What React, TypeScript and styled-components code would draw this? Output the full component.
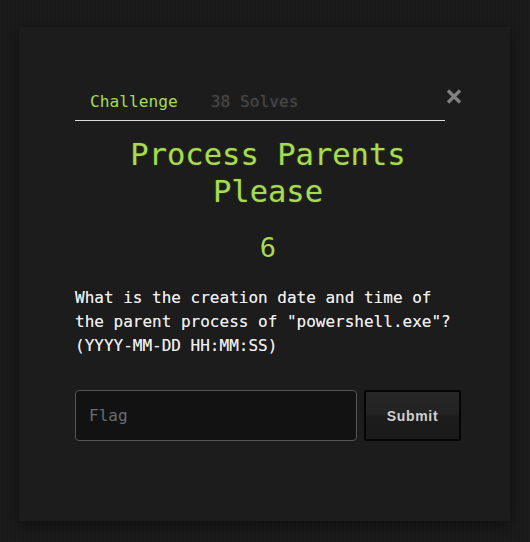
import React from "react";
import styled, { createGlobalStyle } from "styled-components";

const GREEN = "#a6dc4e";
const MONO = `"DejaVu Sans Mono", "Liberation Mono", monospace`;

const Global = createGlobalStyle`
  html, body {
    margin: 0;
    padding: 0;
    background: #1a1a1a;
  }
  body {
    font-family: ${MONO};
  }
  * { box-sizing: border-box; }
`;

const Page = styled.div`
  min-height: 542px;
  padding: 27px 20px 21px 19px;
  background-color: #1a1a1a;
  background-image: repeating-linear-gradient(
    90deg,
    rgba(255, 255, 255, 0.006) 0px,
    rgba(255, 255, 255, 0.006) 2px,
    rgba(0, 0, 0, 0.02) 2px,
    rgba(0, 0, 0, 0.02) 4px
  );
`;

const Modal = styled.div`
  width: 491px;
  height: 494px;
  padding: 57px 49px 0 56px;
  background: #1c1c1c;
  box-shadow: 0 4px 14px rgba(0, 0, 0, 0.45);
  display: flex;
  flex-direction: column;
`;

const Header = styled.div`
  display: flex;
  align-items: flex-start;
`;

const Tabs = styled.nav`
  flex: 1;
  display: flex;
  gap: 3px;
  border-bottom: 1px solid #dcdcdc;
`;

const Tab = styled.span<{ $active?: boolean }>`
  padding: 6px 15px;
  font-size: 16.2px;
  line-height: 24px;
  color: ${(p) => (p.$active ? GREEN : "#474747")};
  text-shadow: ${(p) => (p.$active ? "none" : "0 0 3px rgba(90,90,90,0.3)")};
`;

const Close = styled.button`
  flex: 0 0 16px;
  width: 16px;
  height: 15px;
  margin-top: 5px;
  padding: 0;
  border: 0;
  background: none;
  display: block;
  cursor: pointer;
  svg {
    display: block;
    margin-left: 1px;
  }
`;

const Title = styled.h1`
  margin: 15px 0 0;
  font-family: ${MONO};
  font-size: 30.5px;
  line-height: 37px;
  font-weight: normal;
  text-align: center;
  color: ${GREEN};
  text-shadow: 0 0 2px rgba(166, 220, 78, 0.25);
`;

const Value = styled.div`
  margin-top: 22px;
  font-size: 27px;
  line-height: 32px;
  text-align: center;
  color: ${GREEN};
`;

const Description = styled.p`
  margin: 22px 0 0;
  font-size: 16px;
  line-height: 24px;
  color: #efefef;
  text-shadow: 0 0 0.4px rgba(255, 255, 255, 0.6);
`;

const Form = styled.form`
  margin-top: 32px;
  display: flex;
  gap: 7px;
`;

const FlagInput = styled.input`
  width: 282px;
  height: 51px;
  padding: 0 13px;
  background: #121212;
  border: 1px solid #565656;
  border-radius: 4px;
  color: #ddd;
  font-family: ${MONO};
  font-size: 16px;
  outline: none;
  &::placeholder {
    color: #666c73;
  }
`;

const Submit = styled.button`
  width: 97px;
  height: 51px;
  border: 2px solid #050505;
  border-radius: 2px;
  background: linear-gradient(#272727 0%, #232323 48%, #1c1c1c 52%, #1a1a1a 100%);
  color: #cfcfcf;
  font-family: "Liberation Sans", Arial, sans-serif;
  font-weight: bold;
  font-size: 14px;
  letter-spacing: 0.7px;
  cursor: pointer;
`;

export default function App() {
  return (
    <>
      <Global />
      <Page>
        <Modal>
          <Header>
            <Tabs>
              <Tab $active>Challenge</Tab>
              <Tab>38 Solves</Tab>
            </Tabs>
            <Close aria-label="Close">
              <svg width="16" height="15" viewBox="0 0 16 15">
                <path d="M2 1.5 L14 13.5 M14 1.5 L2 13.5" stroke="#808080" strokeWidth="3.4" strokeLinecap="butt" />
              </svg>
            </Close>
          </Header>
          <Title>Process Parents Please</Title>
          <Value>6</Value>
          <Description>
            What is the creation date and time of the parent process of "powershell.exe"? (YYYY-MM-DD HH:MM:SS)
          </Description>
          <Form onSubmit={(e) => e.preventDefault()}>
            <FlagInput placeholder="Flag" />
            <Submit type="submit">Submit</Submit>
          </Form>
        </Modal>
      </Page>
    </>
  );
}
